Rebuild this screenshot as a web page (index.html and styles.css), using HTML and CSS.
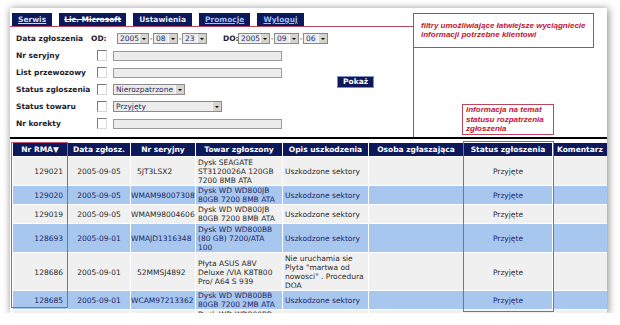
FILE: index.html
```html
<!DOCTYPE html>
<html lang="pl">
<head>
    <meta charset="UTF-8">
    <title>Serwis RMA</title>
    <link rel="stylesheet" href="styles.css">
</head>
<body>

<div class="page">

    <ul class="tabs">
        <li><a class="t-serwis">Serwis</a></li>
        <li><a class="t-off">Lic. Microsoft</a></li>
        <li><a class="t-set">Ustawienia</a></li>
        <li><a>Promocje</a></li>
        <li><a>Wyloguj</a></li>
    </ul>

    <div class="filters">
        <div class="fields">
            <div class="row">
                <span class="lbl short">Data zgłoszenia</span>
                <b class="od">OD:</b>
                <span class="sel year">2005</span><span class="dash">-</span>
                <span class="sel small">08</span><span class="dash">-</span>
                <span class="sel small">23</span>
                <b class="do">DO:</b>
                <span class="sel year">2005</span><span class="dash">-</span>
                <span class="sel small">09</span><span class="dash">-</span>
                <span class="sel small">06</span>
            </div>
            <div class="row">
                <span class="lbl">Nr seryjny</span>
                <span class="chk"></span>
                <span class="txt"></span>
            </div>
            <div class="row">
                <span class="lbl">List przewozowy</span>
                <span class="chk"></span>
                <span class="txt"></span>
            </div>
            <div class="row">
                <span class="lbl">Status zgloszenia</span>
                <span class="chk"></span>
                <span class="sel st1">Nierozpatrzone</span>
            </div>
            <div class="row">
                <span class="lbl">Status towaru</span>
                <span class="chk"></span>
                <span class="sel st2">Przyjęty</span>
            </div>
            <div class="row">
                <span class="lbl">Nr korekty</span>
                <span class="chk"></span>
                <span class="txt"></span>
            </div>
        </div>
        <div class="side">
            <button class="btn">Pokaż</button>
        </div>
    </div>

    <div class="rule"></div>

    <table class="rma">
        <colgroup>
            <col style="width:54px">
            <col style="width:62px">
            <col style="width:64px">
            <col style="width:86px">
            <col style="width:85px">
            <col style="width:94px">
            <col style="width:88px">
            <col style="width:70px">
        </colgroup>
        <thead>
        <tr>
            <th>Nr RMA▼</th>
            <th>Data zgłosz.</th>
            <th>Nr seryjny</th>
            <th>Towar zgłoszony</th>
            <th>Opis uszkodzenia</th>
            <th>Osoba zgłaszająca</th>
            <th>Status zgłoszenia</th>
            <th class="left">Komentarz</th>
        </tr>
        </thead>
        <tbody>
        <tr class="g tall">
            <td class="num">129021</td>
            <td class="c">2005-09-05</td>
            <td class="sn">5JT3LSX2</td>
            <td>Dysk SEAGATE<br>ST3120026A 120GB<br>7200 8MB ATA</td>
            <td>Uszkodzone sektory</td>
            <td></td>
            <td class="c">Przyjęte</td>
            <td></td>
        </tr>
        <tr class="b">
            <td class="num">129020</td>
            <td class="c">2005-09-05</td>
            <td class="sn long">WMAM98007308</td>
            <td>Dysk WD WD800JB<br>80GB 7200 8MB ATA</td>
            <td>Uszkodzone sektory</td>
            <td></td>
            <td class="c">Przyjęte</td>
            <td></td>
        </tr>
        <tr class="g">
            <td class="num">129019</td>
            <td class="c">2005-09-05</td>
            <td class="sn long">WMAM98004606</td>
            <td>Dysk WD WD800JB<br>80GB 7200 8MB ATA</td>
            <td>Uszkodzone sektory</td>
            <td></td>
            <td class="c">Przyjęte</td>
            <td></td>
        </tr>
        <tr class="b tall">
            <td class="num">128693</td>
            <td class="c">2005-09-01</td>
            <td class="sn long">WMAJD1316348</td>
            <td>Dysk WD WD800BB<br>(80 GB) 7200/ATA<br>100</td>
            <td>Uszkodzone sektory</td>
            <td></td>
            <td class="c">Przyjęte</td>
            <td></td>
        </tr>
        <tr class="g tall">
            <td class="num">128686</td>
            <td class="c">2005-09-01</td>
            <td class="sn">52MMSJ4892</td>
            <td>Płyta ASUS A8V<br>Deluxe /VIA K8T800<br>Pro/ A64 S 939</td>
            <td>Nie uruchamia sie<br>Plyta "martwa od<br>nowosci" . Procedura<br>DOA</td>
            <td></td>
            <td class="c">Przyjęte</td>
            <td></td>
        </tr>
        <tr class="b">
            <td class="num">128685</td>
            <td class="c">2005-09-01</td>
            <td class="sn long">WCAM97213362</td>
            <td>Dysk WD WD800BB<br>80GB 7200 2MB ATA</td>
            <td>Uszkodzone sektory</td>
            <td></td>
            <td class="c">Przyjęte</td>
            <td></td>
        </tr>
        <tr class="g">
            <td class="num"></td>
            <td class="c"></td>
            <td class="sn"></td>
            <td class="top">Dysk WD WD800BB</td>
            <td></td>
            <td></td>
            <td></td>
            <td></td>
        </tr>
        </tbody>
    </table>

    <!-- adnotacje -->
    <div class="note note-filters">
        filtry umożliwiające łatwiejsze wyciągniecie<br>
        informacji potrzebne klientowi
    </div>
    <div class="note note-status">
        informacja na temat<br>
        statusu rozpatrzenia<br>
        zgłoszenia
    </div>
    <div class="mark mark-rma"></div>
    <div class="mark mark-status"></div>

</div>

</body>
</html>
```

FILE: styles.css
```css
body {
    margin: 0;
    background: #fff;
    font-family: "DejaVu Sans", Verdana, sans-serif;
    font-size: 7.5px;
    color: #1b1b2b;
}

.page {
    position: relative;
    margin: 8px 0 0 10px;
    width: 597px;
    height: 305px;
    overflow: hidden;
    background: #fff;
    box-shadow: 1px 1px 8px rgba(0, 0, 0, .5);
}

/* menu */
.tabs {
    display: flex;
    gap: 7px;
    margin: 0;
    padding: 5px 0 0 2px;
    list-style: none;
}
.tabs a {
    display: block;
    height: 13px;
    line-height: 13px;
    padding: 0 6px;
    background: #0c1859;
    color: #9ebff4;
    font-weight: bold;
    text-decoration: underline;
}
.tabs .t-serwis {
    color: #d2ddf4;
}
.tabs .t-off {
    padding: 0 5px;
    color: #fff;
    text-decoration: line-through;
}
.tabs .t-set {
    color: #e4eaf8;
    text-decoration: none;
}

/* filtry */
.filters {
    display: flex;
    width: 403px;
    height: 110px;
    border-top: 1px solid #b9475e;
    border-right: 1px solid #b9475e;
}
.fields {
    padding: 3px 0 0 6px;
}
.row {
    display: flex;
    align-items: center;
    height: 17px;
}
.lbl {
    width: 81px;
    font-weight: bold;
    white-space: nowrap;
}
.lbl.short {
    width: 75px;
}
.od {
    width: 26px;
}
.do {
    width: 15px;
    margin-left: 16px;
}
.dash {
    width: 4px;
    text-align: center;
}
.chk {
    box-sizing: border-box;
    width: 10px;
    height: 11px;
    margin-right: 6px;
    background: #fff;
    border: 1px solid;
    border-color: #7a7a7a #d8d8d8 #d8d8d8 #7a7a7a;
}
.txt {
    box-sizing: border-box;
    width: 169px;
    height: 10px;
    background: #ececec;
    border: 1px solid #9a9a9a;
}
.sel {
    position: relative;
    box-sizing: border-box;
    height: 11px;
    line-height: 9px;
    padding-left: 2px;
    background: #ececec;
    border: 1px solid #8a8a8a;
    color: #1c2a66;
    white-space: nowrap;
}
.sel::after {
    content: "";
    position: absolute;
    right: 0;
    top: 0;
    width: 8px;
    height: 9px;
    background: #d6d3cc;
    border-left: 1px solid #fff;
}
.sel::before {
    content: "";
    position: absolute;
    right: 2px;
    top: 4px;
    z-index: 1;
    border: 2px solid transparent;
    border-top: 2px solid #000;
}
.year {
    width: 32px;
}
.small {
    width: 25px;
}
.st1 {
    width: 72px;
}
.st2 {
    width: 109px;
}
.side {
    margin-left: 10px;
}
.btn {
    margin-top: 50px;
    height: 10px;
    padding: 0 5px;
    background: #0c1859;
    border: 0;
    outline: 1px solid #7d8fc4;
    color: #fff;
    font: bold 7.5px/10px "DejaVu Sans", Verdana, sans-serif;
}

.rule {
    height: 2px;
    background: #000;
}

/* tabela */
.rma {
    margin: 3px 0 0 2px;
    width: 612px;
    table-layout: fixed;
    border-collapse: separate;
    border-spacing: 1px;
}
.rma th {
    height: 13px;
    padding: 0;
    line-height: 13px;
    background: #0c1859;
    color: #fff;
    font-weight: bold;
    text-align: center;
    white-space: nowrap;
}
.rma th.left {
    text-align: left;
    padding-left: 4px;
}
.rma td {
    padding: 0 2px;
    line-height: 9px;
    vertical-align: middle;
}
.rma tr.tall td {
    padding-top: 1px;
}
.rma td.top {
    vertical-align: top;
}
.rma tr.g td {
    background: #f0f0f0;
    color: #2a2a2a;
}
.rma tr.b td {
    background: #a8c7ee;
    color: #1b2568;
}
.rma .num {
    text-align: right;
    padding-right: 4px;
}
.rma .c {
    text-align: center;
}
.rma .sn {
    padding-left: 6px;
    white-space: nowrap;
}
.rma .sn.long {
    padding-left: 0;
}

/* adnotacje */
.note {
    position: absolute;
    box-sizing: border-box;
    background: #fff;
    border: 1px solid #b9475e;
    color: #c41230;
    font: italic bold 8px/9px "Liberation Sans", Arial, sans-serif;
}
.note-filters {
    left: 403px;
    top: 5px;
    width: 181px;
    height: 35px;
    padding: 7px 7px 0;
}
.note-status {
    left: 452px;
    top: 96px;
    width: 92px;
    height: 31px;
    padding: 0 3px;
    line-height: 9.5px;
}
.mark {
    position: absolute;
    border: 1px solid #c0566c;
}
.mark-rma {
    left: 1px;
    top: 134px;
    width: 55px;
    height: 164px;
}
.mark-status {
    left: 453px;
    top: 133px;
    width: 89px;
    height: 169px;
}
```
